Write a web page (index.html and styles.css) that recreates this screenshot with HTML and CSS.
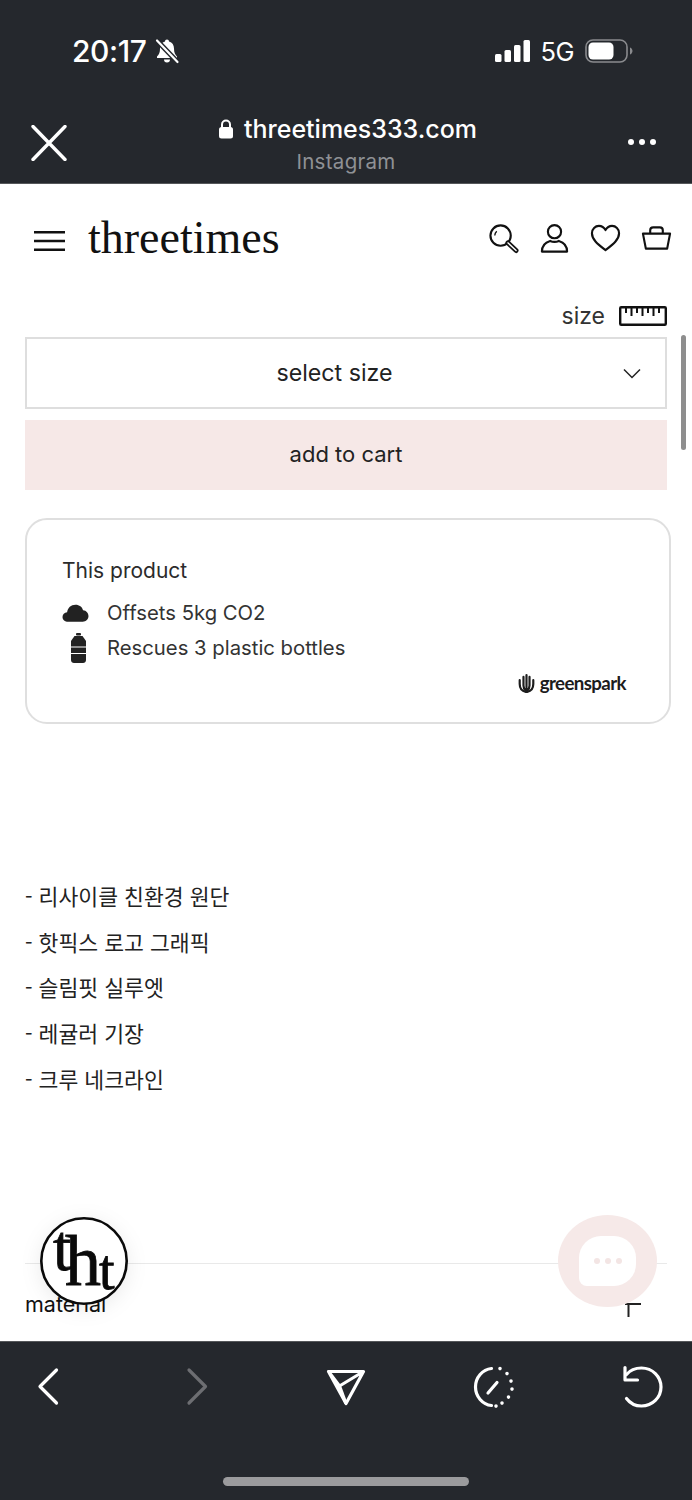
FILE: index.html
```html
<!DOCTYPE html>
<html lang="en">
<head>
<meta charset="utf-8">
<title>threetimes</title>
<link rel="stylesheet" href="styles.css">
</head>
<body>
<div class="phone">
  <header class="topbar">
    <div class="status">
      <span class="time">20:17</span>
      <svg class="bell" viewBox="0 0 26 26"><path d="M13 1.500c-1.200 0-2 .8-2 1.900C7.600 4.300 6 7 6 10.500c0 4-1 6-3 8v1.500h20v-1.500c-2-2-3-4-3-8 0-3.500-1.600-6.200-5-7.100 0-1.100-.8-1.900-2-1.900zM10 21.500a3 3 0 0 0 6 0z" fill="#fff"/><path d="M3 2.500 23.500 24" stroke="#25282d" stroke-width="5"/><path d="M3 2.500 23.500 24" stroke="#fff" stroke-width="2.200" stroke-linecap="round"/></svg>
      <span class="status-spacer"></span>
      <svg class="signal" viewBox="0 0 35 22"><rect x="0" y="14" width="6.500" height="8" rx="1.500"/><rect x="9.500" y="10" width="6.500" height="12" rx="1.500"/><rect x="19" y="5" width="6.500" height="17" rx="1.500"/><rect x="28.500" y="0" width="6.500" height="22" rx="1.500"/></svg>
      <span class="net">5G</span>
      <svg class="battery" viewBox="0 0 48 24"><rect x="1" y="1" width="41" height="22" rx="7" fill="none" stroke="#8a8b8e" stroke-width="1.600"/><rect x="3.500" y="3.500" width="25" height="17" rx="4.500" fill="#fff"/><path d="M45 8.500c1.600.6 2.500 2 2.500 3.500s-.9 2.900-2.500 3.500z" fill="#8a8b8e"/></svg>
    </div>
    <div class="nav">
      <svg class="close" viewBox="0 0 38 36"><path d="M3 1.500 35 34.500M35 1.500 3 34.500" stroke="#fff" stroke-width="3.400" stroke-linecap="round"/></svg>
      <div class="title">
        <div class="url">
          <svg class="lock" viewBox="0 0 16 20"><path d="M4 9V5.500a4 4 0 0 1 8 0V9" fill="none" stroke="#fff" stroke-width="2"/><rect x="1" y="8" width="14" height="11.500" rx="2.500" fill="#fff"/></svg>
          <span>threetimes333.com</span>
        </div>
        <div class="origin">Instagram</div>
      </div>
      <div class="more"><i></i><i></i><i></i></div>
    </div>
  </header>

  <main class="page">
    <div class="site-head">
      <svg class="burger" viewBox="0 0 32 22"><path d="M0 2h32M0 11h32M0 20h32" stroke="#111" stroke-width="2.400"/></svg>
      <span class="brand">threetimes</span>
      <div class="site-icons">
        <svg viewBox="0 0 32 32"><circle cx="13" cy="13" r="10.500" fill="none" stroke="#111" stroke-width="2.200"/><path d="M20.500 20.500 29 28.500" stroke="#111" stroke-width="5" stroke-linecap="round"/><path d="M20.500 20.500 29 28.500" stroke="#fff" stroke-width="1.400" stroke-linecap="round"/><path d="M7 13a6.500 6.500 0 0 1 2-4.500" fill="none" stroke="#111" stroke-width="1.400"/></svg>
        <svg viewBox="0 0 32 32"><circle cx="16" cy="9" r="6.800" fill="none" stroke="#111" stroke-width="2.200"/><path d="M3 29.500c0-7 5-10 8.500-11 2.800 1.300 6.200 1.300 9 0 3.500 1 8.500 4 8.500 11z" fill="none" stroke="#111" stroke-width="2.200" stroke-linejoin="round"/></svg>
        <svg viewBox="0 0 32 32"><path d="M16 28C9 22.500 2 17.500 2 10.500 2 6 5.500 3 9.200 3c3 0 5.300 1.600 6.800 4.300C17.500 4.600 19.800 3 22.800 3 26.500 3 30 6 30 10.500c0 7-7 12-14 17.500z" fill="none" stroke="#111" stroke-width="2.200" stroke-linejoin="round"/></svg>
        <svg viewBox="0 0 32 32"><path d="M2 11h28l-3 15.500H5z" fill="none" stroke="#111" stroke-width="2.200" stroke-linejoin="round"/><path d="M9.500 11V7.500c0-2 1-3 3-3h7c2 0 3 1 3 3V11" fill="none" stroke="#111" stroke-width="2.200"/></svg>
      </div>
    </div>

    <div class="size-row">
      <span>size</span>
      <svg class="ruler" viewBox="0 0 48 20"><rect x="1.200" y="1.200" width="45.600" height="17.600" rx="1" fill="none" stroke="#111" stroke-width="2.400"/><path d="M7 1v6M12.500 1v9M18 1v6M23.500 1v9M29 1v6M34.500 1v9M40 1v6" stroke="#111" stroke-width="2"/></svg>
    </div>

    <div class="select">
      <span>select size</span>
      <svg class="chev" viewBox="0 0 18 11"><path d="M1 1.500 9 9.500 17 1.500" fill="none" stroke="#222" stroke-width="1.500"/></svg>
    </div>
    <div class="cart">add to cart</div>

    <section class="impact">
      <p class="impact-title">This product</p>
      <div class="impact-row">
        <svg class="impact-icon" viewBox="0 0 26 18"><path d="M6 17.500C2.800 17.500.5 15.500.5 12.800c0-2.500 1.800-4.300 4.400-4.600C5.500 4 8.600 1 13 1c3.700 0 6.500 2.200 7.300 5.400 3.200.2 5.200 2.800 5.200 5.600 0 3-2.400 5.500-5.500 5.500z" fill="#222"/></svg>
        <span>Offsets 5kg CO2</span>
      </div>
      <div class="impact-row">
        <svg class="impact-icon" viewBox="-3 0 27 30"><rect x="11" y="0" width="5" height="2.500" rx="1" fill="#222"/><path d="M9.500 3h8l3.500 5v19c0 1.700-1.300 3-3 3H9c-1.700 0-3-1.300-3-3V8z" fill="#222"/><path d="M6 14h15M6 20.500h15" stroke="#fff" stroke-width="1"/></svg>
        <span>Rescues 3 plastic bottles</span>
      </div>
      <div class="gs">
        <svg class="gs-mark" viewBox="0 0 18 21"><path d="M9 1.500v17M5.800 3.500v9c0 2.500 1 4.500 2.500 6M12.200 3.500v9c0 2.500-1 4.500-2.500 6" fill="none" stroke="#1c1c1c" stroke-width="2.300" stroke-linecap="round"/><path d="M1.800 7v4c0 4 2.500 7.500 6.500 8.500M16.200 7v4c0 4-2.500 7.500-6.500 8.500" fill="none" stroke="#1c1c1c" stroke-width="2.300" stroke-linecap="round"/></svg>
        <span>greenspark</span>
      </div>
    </section>

    <ul class="details" lang="ko">
      <li>- 리사이클 친환경 원단</li>
      <li>- 핫픽스 로고 그래픽</li>
      <li>- 슬림핏 실루엣</li>
      <li>- 레귤러 기장</li>
      <li>- 크루 네크라인</li>
    </ul>

    <div class="accordion">
      <span>material</span>
      <svg class="acc-icon" viewBox="0 0 16 14"><path d="M16 1H0M3.500 1v13" fill="none" stroke="#222" stroke-width="2"/></svg>
    </div>

    <div class="scrollbar"></div>

    <svg class="tht" viewBox="0 0 88 88">
      <circle cx="44" cy="44" r="42.700" fill="#fff" stroke="#0a0a0a" stroke-width="2.600"/>
      <text class="tht-a" x="13" y="53">t</text>
      <text class="tht-b" x="25" y="68">h</text>
      <text class="tht-c" x="59" y="72">t</text>
    </svg>

    <div class="chat">
      <div class="chat-bubble"><i></i><i></i><i></i></div>
    </div>
  </main>

  <footer class="toolbar">
    <div class="tools">
      <svg viewBox="0 0 44 44"><path d="M30.500 5 14 21.500 30.500 38" fill="none" stroke="#fff" stroke-width="3.200" stroke-linecap="round" stroke-linejoin="round"/></svg>
      <svg viewBox="0 0 44 44"><path d="M14 5 30.500 21.500 14 38" fill="none" stroke="#6d6e72" stroke-width="3.200" stroke-linecap="round" stroke-linejoin="round"/></svg>
      <svg viewBox="0 0 44 44"><path d="M5.500 6.500h35L23 38.500z M5.500 6.500 16.500 21 40.500 6.500" fill="none" stroke="#fff" stroke-width="3.200" stroke-linejoin="round"/><path d="M16.500 21 23 38.500" stroke="#fff" stroke-width="3.200"/></svg>
      <svg viewBox="0 0 44 44"><path d="M19.500 3.500C10.500 4.500 3.500 12.500 3.500 22s7 17.500 16 18.500" fill="none" stroke="#fff" stroke-width="3.200" stroke-linecap="round"/><path d="M16 28 25 17.500" stroke="#fff" stroke-width="3.200" stroke-linecap="round"/><path d="M28 3.500v.1M35 8.500v.1M39 16v.1M40 24v.1M36.500 32v.1M30 38v.1M24 41v.1" stroke="#fff" stroke-width="3.600" stroke-linecap="round"/></svg>
      <svg viewBox="0 0 44 44"><path d="M6.500 9.500C10 5.300 15.500 3 21.500 3 32.500 3 41 11.500 41 22s-8.500 19-19.500 19c-6.500 0-11.500-2.800-15-7.500" fill="none" stroke="#fff" stroke-width="3.200" stroke-linecap="round"/><path d="M5 2.500v12.500h12.500" fill="none" stroke="#fff" stroke-width="3.200" stroke-linecap="round" stroke-linejoin="round"/></svg>
    </div>
    <div class="home-indicator"></div>
  </footer>
</div>
</body>
</html>
```
FILE: styles.css
```css
* { box-sizing: border-box; }
html, body { margin: 0; padding: 0; background: #fff; }
body { font-family: Inter, "Noto Sans CJK KR", sans-serif; color: #222; }

.phone { width: 692px; height: 1500px; display: flex; flex-direction: column; overflow: hidden; }

/* top browser chrome */
.topbar { height: 184px; flex: none; background: #25282d; border-bottom: 1px solid #55575a; padding-top: 30px; color: #fff; }
.status { height: 42px; display: flex; align-items: center; padding: 0 59px 0 72px; }
.time { font-size: 30px; font-weight: 500; letter-spacing: -0.4px; }
.bell { width: 26px; height: 26px; margin-left: 7px; }
.status-spacer { flex: 1; }
.signal { width: 35px; height: 22px; fill: #fff; }
.net { font-size: 25.500px; margin-left: 10px; margin-right: -1px; letter-spacing: -0.5px; }
.battery { width: 48px; height: 24px; margin-left: 12px; }

.nav { margin-top: 40px; display: grid; grid-template-columns: 130px 1fr 130px; }
.close { width: 38px; height: 36px; margin: 13px 0 0 30px; }
.title { text-align: center; }
.url { height: 34px; display: flex; align-items: center; justify-content: center; gap: 10px; font-size: 25px; font-weight: 500; padding-left: 3px; }
.lock { width: 16px; height: 20px; }
.origin { height: 32px; line-height: 32px; font-size: 20.500px; color: #8f9195; letter-spacing: 0.3px; }
.more { display: flex; gap: 4px; justify-content: flex-end; padding: 27px 36px 0 0; }
.more i { width: 6px; height: 6px; border-radius: 50%; background: #fff; margin-left: 1px; }

/* page */
.page { position: relative; flex: 1; min-height: 0; overflow: hidden; padding: 0 25px; background: #fff; }

.site-head { height: 110px; display: flex; align-items: center; margin: 0 -5px 0 9px; }
.burger { width: 31px; height: 22px; flex: none; margin-top: 3px; }
.brand { font-family: "Liberation Serif", serif; font-size: 46px; line-height: 50px; margin-top: -3px; color: #111; margin-left: 23px; }
.site-icons { margin-left: auto; display: flex; gap: 20px; }
.site-icons svg { width: 31px; height: 31px; display: block; margin-top: -2px; }

.size-row { height: 43px; display: flex; align-items: center; justify-content: flex-end; gap: 14px; font-size: 23px; color: #333; }
.ruler { width: 48px; height: 20px; }

.select { position: relative; height: 72px; width: 642px; border: 2px solid #dedede; display: flex; align-items: center; justify-content: center; font-size: 23.200px; color: #222; padding-right: 23px; }
.chev { position: absolute; right: 24px; top: 29px; width: 18px; height: 11px; }

.cart { height: 70px; width: 642px; margin-top: 11px; padding-bottom: 3px; background: #f6e8e7; display: flex; align-items: center; justify-content: center; font-size: 22px; color: #222; }

.impact { margin-top: 28px; width: 646px; height: 206px; border: 2px solid #dfdfdf; border-radius: 22px; padding: 35px 35px 0; position: relative; font-size: 20.300px; color: #333; }
.impact-title { margin: 0 0 8px; line-height: 32px; font-size: 21px; color: #2b2b2b; }
.impact-row { height: 35px; display: flex; align-items: center; gap: 18px; }
.impact-icon { width: 27px; height: 30px; flex: none; }
.gs { position: absolute; right: 43px; bottom: 28px; display: flex; align-items: center; gap: 5px; font-family: Lato, sans-serif; font-weight: 700; font-size: 18.700px; letter-spacing: -0.6px; color: #1c1c1c; }
.gs-mark { width: 17px; height: 21px; }

.details { list-style: none; margin: 149px 0 0; padding: 0; font-size: 21.600px; line-height: 45.700px; color: #222; font-family: "Noto Sans CJK KR", Inter, sans-serif; }

.accordion { margin-top: 161px; border-top: 1px solid #e9e9e9; display: flex; justify-content: space-between; padding-top: 24px; font-size: 21.500px; line-height: 32px; color: #111; position: relative; }
.acc-icon { position: absolute; left: 600px; top: 39px; width: 16px; height: 14px; }

.scrollbar { position: absolute; right: 6px; top: 151px; width: 5px; height: 115px; border-radius: 3px; background: #8e8e8e; }

.tht { position: absolute; left: 40px; top: 1033px; width: 88px; height: 88px; filter: drop-shadow(0 4px 10px rgba(0,0,0,.08)); }
.tht-a, .tht-b, .tht-c { font-family: "Liberation Serif", serif; fill: #0a0a0a; stroke: #0a0a0a; stroke-width: 0.8px; }
.tht-a { font-size: 66px; }
.tht-b { font-size: 72px; }
.tht-c { font-size: 56px; }

.chat { position: absolute; left: 558px; top: 1031px; width: 99px; height: 92px; border-radius: 50%; background: #f6e9e8; display: flex; align-items: center; justify-content: center; }
.chat-bubble { width: 57px; height: 50px; background: #fff; border-radius: 22px 22px 22px 8px; display: flex; align-items: center; justify-content: center; gap: 5px; }
.chat-bubble i { width: 6px; height: 6px; border-radius: 50%; background: #f3e5e4; }

/* bottom toolbar */
.toolbar { height: 159px; flex: none; background: #25282d; border-top: 1px solid #55575a; padding-top: 23px; }
.tools { display: flex; justify-content: space-between; padding: 0 28px 0 26px; }
.tools svg { width: 44px; height: 44px; display: block; }
.home-indicator { width: 246px; height: 9px; margin: 68px auto 0 223px; border-radius: 5px; background: #9b9b9d; }
```
